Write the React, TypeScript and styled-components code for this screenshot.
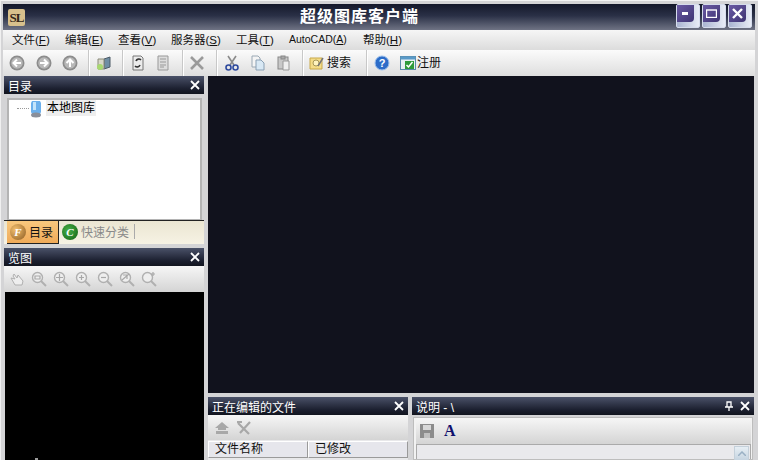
import styled, { createGlobalStyle } from 'styled-components'

const Global = createGlobalStyle`
	html, body { margin: 0; padding: 0; overflow: hidden; }
	body { font-family: "Liberation Sans", "Noto Sans CJK SC", sans-serif; }
`
const Win = styled.div`
	width: 758px;
	height: 460px;
	box-sizing: border-box;
	padding: 3px 4px 0 3px;
	background: #d4d4d6;
	border-top: 1px solid #f4f4f4;
	border-left: 1px solid #f0f0f0;
	display: flex;
	flex-direction: column;
	overflow: hidden;
`
const TitleBar = styled.div`
	height: 26px;
	flex: none;
	margin: 0 -1px;
	display: flex;
	align-items: center;
	position: relative;
	background: linear-gradient(#14182a, #2a3046 45%, #6f7384);
`
const Logo = styled.div`
	width: 17px;
	height: 17px;
	margin-left: 5px;
	background: #d8c08c;
	border-radius: 2px;
	color: #33261a;
	font: bold 13px "Liberation Serif", serif;
	line-height: 17px;
	text-align: center;
	letter-spacing: -1px;
`
const Title = styled.div`
	position: absolute;
	left: 297px;
	top: 1px;
	color: #fff;
	font: bold 16px "Noto Sans CJK SC", serif;
	line-height: 20px;
	letter-spacing: 1px;
	white-space: nowrap;
`
const WinButtons = styled.div`
	margin-left: auto;
	display: flex;
	gap: 2px;
	margin-top: -2px;
	margin-right: 3px;
`
const WinBtn = styled.div`
	width: 24px;
	height: 24px;
	box-sizing: border-box;
	border: 1px solid #d6dcec;
	border-radius: 2px;
	background: linear-gradient(90deg, #a9b4d0, #e8ecf6);
	position: relative;
	& > div {
		position: absolute;
		left: 0;
		top: 0;
		width: 17px;
		height: 17px;
		border-radius: 0 0 4px 0;
		background: linear-gradient(135deg, #6a5aa4, #3e3472);
		display: flex;
		align-items: center;
		justify-content: center;
	}
`
const MenuBar = styled.div`
	height: 20px;
	flex: none;
	margin: 0 -1px;
	display: flex;
	align-items: center;
	padding: 0 0 2px 9px;
	box-sizing: border-box;
	background: linear-gradient(#f6f6f6, #dcdcdc);
	font-size: 11.5px;
	color: #111;
`
const MenuItem = styled.span<{ $w: number; $small?: boolean }>`
	width: ${(p) => p.$w}px;
	flex: none;
	white-space: nowrap;
	font-size: ${(p) => (p.$small ? '10.5px' : 'inherit')};
	u { text-underline-offset: 1px; }
`
const ToolBar = styled.div`
	height: 26px;
	flex: none;
	margin: 0 -1px;
	padding-left: 6px;
	display: flex;
	align-items: center;
	background: linear-gradient(#fbfbfb, #dedede);
	font-size: 12px;
	color: #111;
`
const Sep = styled.div<{ $l: number; $r: number }>`
	width: 1px;
	height: 26px;
	flex: none;
	background: #fff;
	border-left: 1px solid #c8c8c8;
	margin: 0 ${(p) => p.$r}px 0 ${(p) => p.$l}px;
`
const Tool = styled.svg<{ $gap?: number }>`
	width: 16px;
	height: 16px;
	flex: none;
	margin-right: ${(p) => p.$gap ?? 0}px;
`
const ToolText = styled.span<{ $l: number }>`
	margin-left: ${(p) => p.$l}px;
	flex: none;
	line-height: 16px;
`
const Body = styled.div`
	flex: 1;
	min-height: 0;
	display: flex;
	gap: 4px;
`
const LeftCol = styled.div`
	width: 200px;
	flex: none;
	display: flex;
	flex-direction: column;
	gap: 4px;
`
const RightCol = styled.div`
	flex: 1;
	min-width: 0;
	display: flex;
	flex-direction: column;
	gap: 4px;
`
const PanelHead = styled.div`
	height: 18px;
	flex: none;
	display: flex;
	align-items: center;
	gap: 6px;
	padding: 0 4px;
	color: #fff;
	font-size: 12px;
	background: linear-gradient(#4a5168, #1c2030 70%, #12151f);
	span:first-child { flex: 1; white-space: nowrap; }
`
const DirPanel = styled.div`
	height: 168px;
	flex: none;
	display: flex;
	flex-direction: column;
`
const TreeBox = styled.div`
	height: 122px;
	flex: none;
	box-sizing: border-box;
	margin: 4px 2px 0 3px;
	background: #fff;
	border: 2px solid #b4b4b4;
	border-bottom-width: 1px;
	display: flex;
	align-items: flex-start;
	padding: 0 0 0 8px;
	font-size: 12px;
	color: #000;
`
const TreeLine = styled.div`
	width: 12px;
	margin-top: 8px;
	flex: none;
	border-top: 1px dotted #999;
`
const TreeLabel = styled.span`
	background: #eeeeee;
	padding: 0 1px;
	margin-left: 3px;
	line-height: 16px;
`
const TabStrip = styled.div`
	height: 24px;
	flex: none;
	display: flex;
	align-items: center;
	background: linear-gradient(#ebe6d2, #f6f2e4);
	font-size: 12px;
	padding-left: 3px;
	border-top: 1px solid #222;
	box-sizing: border-box;
`
const Tab = styled.div<{ $active?: boolean }>`
	height: 23px;
	display: flex;
	align-items: center;
	gap: 3px;
	box-sizing: border-box;
	padding: 0 5px 0 3px;
	margin-top: -1px;
	color: ${(p) => (p.$active ? '#111' : '#8a8a8a')};
	background: ${(p) => (p.$active ? 'linear-gradient(#f8c87e, #f0aa58)' : 'none')};
	border-right: ${(p) => (p.$active ? '1px solid #222' : '1px solid transparent')};
	border-bottom: ${(p) => (p.$active ? '1px solid #222' : '1px solid transparent')};
`
const TabBall = styled.div<{ $bg: string }>`
	width: 16px;
	height: 16px;
	border-radius: 50%;
	background: ${(p) => p.$bg};
	color: #fff;
	font: italic bold 11px "Liberation Serif", serif;
	line-height: 16px;
	text-align: center;
`
const TabDivider = styled.div`
	width: 1px;
	height: 15px;
	background: #aaa;
	margin-left: 2px;
`
const PreviewPanel = styled.div`
	flex: 1;
	min-height: 0;
	display: flex;
	flex-direction: column;
`
const PanelTools = styled.div<{ $h: number; $left?: number }>`
	height: ${(p) => p.$h}px;
	flex: none;
	display: flex;
	align-items: center;
	background: linear-gradient(#f6f6f6, #d4d4d4);
	padding-left: ${(p) => p.$left ?? 5}px;
	gap: 6px;
`
const BlackView = styled.div`
	flex: 1;
	background: #000;
	margin-left: 1px;
	position: relative;
`
const ViewMark = styled.div`
	position: absolute;
	left: 30px;
	bottom: 0;
	width: 3px;
	height: 2px;
	background: #9a9a9a;
`
const Canvas = styled.div`
	height: 317px;
	flex: none;
	background: #11121d;
`
const BottomRow = styled.div`
	flex: 1;
	min-height: 0;
	display: flex;
	gap: 4px;
`
const EditPanel = styled.div`
	width: 200px;
	flex: none;
	display: flex;
	flex-direction: column;
	background: #e8e8ea;
`
const NotePanel = styled.div`
	flex: 1;
	min-width: 0;
	display: flex;
	flex-direction: column;
`
const TableHead = styled.div`
	height: 17px;
	flex: none;
	display: flex;
	font-size: 12px;
	color: #111;
	margin-top: 1px;
`
const HeadCell = styled.div<{ $w?: number }>`
	width: ${(p) => (p.$w ? `${p.$w}px` : 'auto')};
	flex: ${(p) => (p.$w ? 'none' : 1)};
	box-sizing: border-box;
	padding-left: 6px;
	line-height: 15px;
	background: #e6e6ec;
	border: 1px solid #9a9a9a;
	border-left-color: #fff;
	border-top-color: #fff;
`
const NoteBody = styled.div`
	flex: 1;
	min-height: 0;
	box-sizing: border-box;
	margin: 2px 1px 0 1px;
	border: 1px solid #bdbdbd;
	padding: 0 1px 0 2px;
	background: #f2f2f2;
	display: flex;
	flex-direction: column;
`
const NoteEdit = styled.div`
	flex: 1;
	background: #e9e9ec;
	border: 1px solid #aaa;
	border-bottom: none;
	position: relative;
`
const ScrollUp = styled.div`
	position: absolute;
	right: 1px;
	top: 1px;
	width: 15px;
	height: 15px;
	background: linear-gradient(#e6eef4, #c6d4e0);
	border: 1px solid #c4d0da;
	box-sizing: border-box;
	display: flex;
	align-items: center;
	justify-content: center;
`
const FontA = styled.span`
	font: bold 16px "Liberation Serif", serif;
	color: #10106e;
	line-height: 16px;
	margin-left: 4px;
`

function X() {
	return (
		<svg width="10" height="10" viewBox="0 0 10 10" style={{ flex: 'none' }}>
			<path d="M1 1l8 8M9 1l-8 8" stroke="#fff" strokeWidth="1.8" />
		</svg>
	)
}
function RoundArrow({ d, gap }: { d: string; gap: number }) {
	return (
		<Tool viewBox="0 0 16 16" $gap={gap}>
			<circle cx="8" cy="8" r="7.5" fill="#8c8c8c" />
			<circle cx="8" cy="8" r="5.8" fill="#b8b8b8" />
			<path d={d} stroke="#fff" strokeWidth="2" fill="none" />
		</Tool>
	)
}
function Lens({ inner }: { inner?: string }) {
	return (
		<svg width="16" height="16" viewBox="0 0 16 16" style={{ flex: 'none' }}>
			<circle cx="6.5" cy="6.5" r="5" fill="#eee" stroke="#b0b0b0" strokeWidth="1.4" />
			<path d="M10 10l5 5" stroke="#b0b0b0" strokeWidth="2" />
			{inner && <path d={inner} stroke="#a8a8a8" strokeWidth="1.2" fill="none" />}
		</svg>
	)
}

export default function App() {
	return (
		<Win>
			<Global />
			<TitleBar>
				<Logo>SL</Logo>
				<Title>超级图库客户端</Title>
				<WinButtons>
					<WinBtn>
						<div>
							<svg width="7" height="3"><rect width="6" height="3" fill="#fff" /></svg>
						</div>
					</WinBtn>
					<WinBtn>
						<div>
							<svg width="11" height="9"><rect x="0.5" y="1" width="10" height="7.5" fill="none" stroke="#fff" strokeWidth="1.4" /></svg>
						</div>
					</WinBtn>
					<WinBtn>
						<div>
							<svg width="11" height="11" viewBox="0 0 11 11"><path d="M1 1l9 9M10 1l-9 9" stroke="#fff" strokeWidth="2.4" /></svg>
						</div>
					</WinBtn>
				</WinButtons>
			</TitleBar>
			<MenuBar>
				<MenuItem $w={53}>文件(<u>F</u>)</MenuItem>
				<MenuItem $w={53}>编辑(<u>E</u>)</MenuItem>
				<MenuItem $w={53}>查看(<u>V</u>)</MenuItem>
				<MenuItem $w={65}>服务器(<u>S</u>)</MenuItem>
				<MenuItem $w={53}>工具(<u>T</u>)</MenuItem>
				<MenuItem $w={74} $small>AutoCAD(<u>A</u>)</MenuItem>
				<MenuItem $w={50}>帮助(<u>H</u>)</MenuItem>
			</MenuBar>
			<ToolBar>
				<RoundArrow d="M12 8H5M8 4.5L4.5 8 8 11.5" gap={11} />
				<RoundArrow d="M4 8h7M8 4.5L11.5 8 8 11.5" gap={10} />
				<RoundArrow d="M8 12V5M4.5 8L8 4.5 11.5 8" gap={0} />
				<Sep $l={10} $r={6} />
				<Tool viewBox="0 0 16 16">
					<path d="M8 4l6-2v10l-6 2z" fill="#6f8ea4" stroke="#4c5a66" />
					<path d="M2 4h6v10H2z" fill="#d8d8c8" stroke="#8a8a7a" />
					<circle cx="4" cy="12" r="3" fill="#a8d870" />
				</Tool>
				<Sep $l={10} $r={6} />
				<Tool viewBox="0 0 16 16" $gap={9}>
					<path d="M3 1h8l2 2v12H3z" fill="#ececec" stroke="#777" />
					<path d="M6 6a3 3 0 015-1M10 10a3 3 0 01-5 1" stroke="#333" strokeWidth="1.6" fill="none" />
				</Tool>
				<Tool viewBox="0 0 16 16">
					<path d="M3 1h10v14H3z" fill="#ddd" stroke="#999" />
					<path d="M5 4h6M5 7h6M5 10h6M5 12h4" stroke="#999" />
				</Tool>
				<Sep $l={11} $r={5} />
				<Tool viewBox="0 0 16 16">
					<path d="M2 2l12 12M14 2L2 14" stroke="#9a9a9a" strokeWidth="2.6" />
				</Tool>
				<Sep $l={11} $r={6} />
				<Tool viewBox="0 0 16 16" $gap={10}>
					<path d="M4 1l6 9M12 1L6 10" stroke="#8a8a8a" strokeWidth="1.6" />
					<circle cx="4.5" cy="12.5" r="2.5" fill="none" stroke="#2e4a9e" strokeWidth="1.6" />
					<circle cx="11.5" cy="12.5" r="2.5" fill="none" stroke="#2e4a9e" strokeWidth="1.6" />
				</Tool>
				<Tool viewBox="0 0 16 16" $gap={10}>
					<path d="M2 1h6l2 2v9H2z" fill="#f4f4f4" stroke="#9aa8b4" />
					<path d="M6 5h5l3 3v7H6z" fill="#d8e8f4" stroke="#8aa0b4" />
				</Tool>
				<Tool viewBox="0 0 16 16">
					<rect x="2" y="2" width="10" height="12" fill="#c8c8c8" stroke="#888" />
					<rect x="5" y="1" width="4" height="3" fill="#aaa" stroke="#888" />
					<path d="M7 6h6v9H7z" fill="#eee" stroke="#999" />
				</Tool>
				<Sep $l={10} $r={5} />
				<Tool viewBox="0 0 16 16">
					<path d="M1 3h12v11H1z" fill="#f4dc88" stroke="#c8a848" />
					<circle cx="7" cy="8" r="3" fill="#fff4c0" stroke="#a89858" />
					<path d="M9 11l5-8" stroke="#777" strokeWidth="1.5" />
				</Tool>
				<ToolText $l={2}>搜索</ToolText>
				<Sep $l={15} $r={6} />
				<Tool viewBox="0 0 16 16" $gap={10}>
					<circle cx="8" cy="8" r="7" fill="#2c6cc8" />
					<circle cx="8" cy="8" r="7" fill="none" stroke="#9cc0ec" />
					<text x="8" y="12" textAnchor="middle" fontSize="11" fontWeight="bold" fill="#fff" fontFamily="Liberation Sans">?</text>
				</Tool>
				<Tool viewBox="0 0 16 16">
					<rect x="0.5" y="1.5" width="15" height="13" fill="#e8f0f4" stroke="#5a8aa8" />
					<rect x="0.5" y="1.5" width="15" height="3" fill="#5a9ac8" />
					<rect x="5" y="6" width="9" height="8" fill="#2e9a3a" />
					<path d="M6.5 10l2 2 4-5" stroke="#fff" strokeWidth="1.5" fill="none" />
				</Tool>
				<ToolText $l={1}>注册</ToolText>
			</ToolBar>
			<Body>
				<LeftCol>
					<DirPanel>
						<PanelHead>
							<span>目录</span>
							<X />
						</PanelHead>
						<TreeBox>
							<TreeLine />
							<svg width="14" height="18" viewBox="0 0 14 18" style={{ flex: 'none' }}>
								<path d="M3 1h8l1 2v9l-1 2H3l-1-2V3z" fill="#6cb0ec" />
								<path d="M4 2h3v8H4z" fill="#c4e4fa" />
								<ellipse cx="7" cy="15" rx="5" ry="2.5" fill="#8a8f9a" />
							</svg>
							<TreeLabel>本地图库</TreeLabel>
						</TreeBox>
						<TabStrip>
							<Tab $active>
								<TabBall $bg="radial-gradient(circle at 35% 35%, #f4c070, #8a5a20)">F</TabBall>
								<span>目录</span>
							</Tab>
							<Tab>
								<TabBall $bg="radial-gradient(circle at 40% 40%, #48b048, #106010)">C</TabBall>
								<span>快速分类</span>
								<TabDivider />
							</Tab>
						</TabStrip>
					</DirPanel>
					<PreviewPanel>
						<PanelHead>
							<span>览图</span>
							<X />
						</PanelHead>
						<PanelTools $h={26}>
							<svg width="16" height="16" viewBox="0 0 16 16" style={{ flex: 'none' }}>
								<path d="M2 7l4 7h7l1-4-5-6-1 3-3-4-1 2 2 3z" fill="#eee" stroke="#b0b0b0" />
							</svg>
							<Lens inner="M4 5h5v3H4z" />
							<Lens inner="M6.5 3v7M3 6.5h7" />
							<Lens inner="M6.5 4v5M4 6.5h5" />
							<Lens inner="M4 6.5h5" />
							<Lens inner="M3 9l7-6M4 4h4v4" />
							<Lens inner="M12 1v4M10 3h4" />
						</PanelTools>
						<BlackView>
							<ViewMark />
						</BlackView>
					</PreviewPanel>
				</LeftCol>
				<RightCol>
					<Canvas />
					<BottomRow>
						<EditPanel>
							<PanelHead>
								<span>正在编辑的文件</span>
								<X />
							</PanelHead>
							<PanelTools $h={25} $left={6}>
								<svg width="16" height="14" viewBox="0 0 16 14" style={{ flex: 'none' }}>
									<path d="M8 1l7 6h-3v2H4V7H1zM2 10h12v3H2z" fill="#a8a8a8" />
								</svg>
								<svg width="16" height="14" viewBox="0 0 16 14" style={{ flex: 'none' }}>
									<path d="M2 2l11 11M14 1L4 12M1 1h5" stroke="#a8a8a8" strokeWidth="2.2" />
								</svg>
							</PanelTools>
							<TableHead>
								<HeadCell $w={100}>文件名称</HeadCell>
								<HeadCell>已修改</HeadCell>
							</TableHead>
						</EditPanel>
						<NotePanel>
							<PanelHead>
								<span>说明 - \</span>
								<svg width="10" height="10" viewBox="0 0 10 10" style={{ flex: 'none' }}>
									<path d="M3 1h4v5H3zM1 6h8M5 6v4" stroke="#fff" strokeWidth="1.3" fill="none" />
								</svg>
								<X />
							</PanelHead>
							<NoteBody>
								<PanelTools $h={26} $left={4}>
									<svg width="14" height="14" viewBox="0 0 14 14" style={{ flex: 'none' }}>
										<path d="M0 0h14v14H0z" fill="#8c8c8c" />
										<path d="M3 1h8v5H3z" fill="#d8d8d8" />
										<path d="M4 9h6v5H4z" fill="#c0c0c0" />
									</svg>
									<FontA>A</FontA>
								</PanelTools>
								<NoteEdit>
									<ScrollUp>
										<svg width="8" height="5" viewBox="0 0 8 5"><path d="M0 5l4-4 4 4" stroke="#9ab0c4" strokeWidth="1.5" fill="none" /></svg>
									</ScrollUp>
								</NoteEdit>
							</NoteBody>
						</NotePanel>
					</BottomRow>
				</RightCol>
			</Body>
		</Win>
	)
}
